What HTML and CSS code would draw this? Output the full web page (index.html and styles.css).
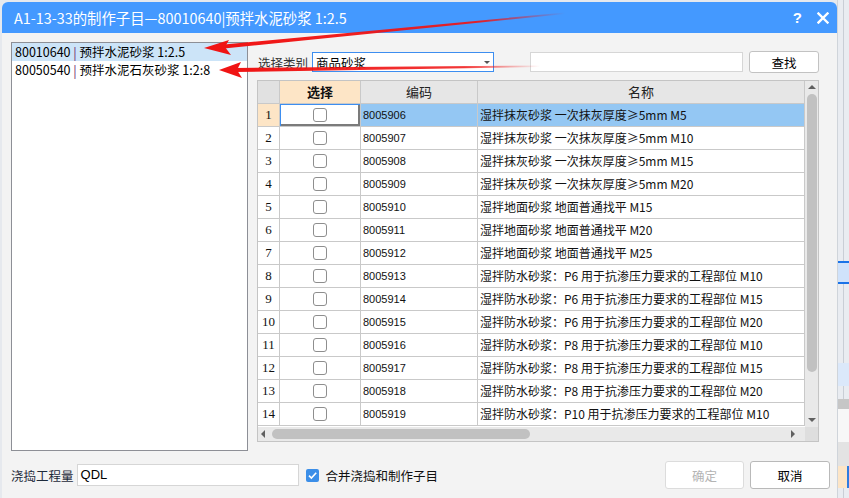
FILE: index.html
```html
<!DOCTYPE html>
<html>
<head>
<meta charset="utf-8">
<link rel="stylesheet" href="styles.css">
</head>
<body>
<div class="screen">
  <div class="dialog">
    <div class="titlebar">
      <span class="title">A1-13-33的制作子目—80010640|预拌水泥砂浆 1:2.5</span>
      <span class="tb-spacer"></span>
      <span class="tb-help">?</span>
      <svg class="tb-close" width="12" height="12" viewBox="0 0 12 12"><path d="M1.5 1.5 L10.5 10.5 M10.5 1.5 L1.5 10.5" stroke="#fff" stroke-width="2.4" stroke-linecap="square"/></svg>
    </div>
    <div class="main">
      <div class="list">
        <div class="list-item sel">80010640 <span class="pipe">|</span> 预拌水泥砂浆 1:2.5</div>
        <div class="list-item">80050540 <span class="pipe">|</span> 预拌水泥石灰砂浆 1:2:8</div>
      </div>
      <div class="panel">
        <div class="toolbar">
          <span class="lbl">选择类别</span>
          <div class="combo"><span class="combo-text">商品砂浆</span><span class="caret"></span></div>
          <div class="search"></div>
          <div class="btn find">查找</div>
        </div>
        <div class="gridwrap">
          <div class="grid">
            <div class="hc corner-h"></div>
            <div class="hc hsel">选择</div>
            <div class="hc">编码</div>
            <div class="hc">名称</div>

            <div class="rn rsel">1</div><div class="ck focus"><span class="box"></span></div><div class="code rowsel">8005906</div><div class="name rowsel">湿拌抹灰砂浆 一次抹灰厚度≥5mm M5</div>
            <div class="rn">2</div><div class="ck"><span class="box"></span></div><div class="code">8005907</div><div class="name">湿拌抹灰砂浆 一次抹灰厚度≥5mm M10</div>
            <div class="rn">3</div><div class="ck"><span class="box"></span></div><div class="code">8005908</div><div class="name">湿拌抹灰砂浆 一次抹灰厚度≥5mm M15</div>
            <div class="rn">4</div><div class="ck"><span class="box"></span></div><div class="code">8005909</div><div class="name">湿拌抹灰砂浆 一次抹灰厚度≥5mm M20</div>
            <div class="rn">5</div><div class="ck"><span class="box"></span></div><div class="code">8005910</div><div class="name">湿拌地面砂浆 地面普通找平 M15</div>
            <div class="rn">6</div><div class="ck"><span class="box"></span></div><div class="code">8005911</div><div class="name">湿拌地面砂浆 地面普通找平 M20</div>
            <div class="rn">7</div><div class="ck"><span class="box"></span></div><div class="code">8005912</div><div class="name">湿拌地面砂浆 地面普通找平 M25</div>
            <div class="rn">8</div><div class="ck"><span class="box"></span></div><div class="code">8005913</div><div class="name">湿拌防水砂浆：P6 用于抗渗压力要求的工程部位 M10</div>
            <div class="rn">9</div><div class="ck"><span class="box"></span></div><div class="code">8005914</div><div class="name">湿拌防水砂浆：P6 用于抗渗压力要求的工程部位 M15</div>
            <div class="rn">10</div><div class="ck"><span class="box"></span></div><div class="code">8005915</div><div class="name">湿拌防水砂浆：P6 用于抗渗压力要求的工程部位 M20</div>
            <div class="rn">11</div><div class="ck"><span class="box"></span></div><div class="code">8005916</div><div class="name">湿拌防水砂浆：P8 用于抗渗压力要求的工程部位 M10</div>
            <div class="rn">12</div><div class="ck"><span class="box"></span></div><div class="code">8005917</div><div class="name">湿拌防水砂浆：P8 用于抗渗压力要求的工程部位 M15</div>
            <div class="rn">13</div><div class="ck"><span class="box"></span></div><div class="code">8005918</div><div class="name">湿拌防水砂浆：P8 用于抗渗压力要求的工程部位 M20</div>
            <div class="rn">14</div><div class="ck"><span class="box"></span></div><div class="code">8005919</div><div class="name">湿拌防水砂浆：P10 用于抗渗压力要求的工程部位 M10</div>
          </div>
          <div class="vscroll">
            <span class="arr-up"></span>
            <span class="vthumb"></span>
            <span class="sb-spacer"></span>
            <span class="arr-down"></span>
          </div>
          <div class="hscroll">
            <span class="arr-left"></span>
            <span class="hthumb"></span>
            <span class="sb-spacer"></span>
            <span class="arr-right"></span>
          </div>
          <div class="sb-corner"></div>
        </div>
      </div>
    </div>
    <div class="footer">
      <span class="lbl qty">浇捣工程量</span>
      <div class="input">QDL</div>
      <span class="chk"><svg width="13" height="13" viewBox="0 0 13 13"><path d="M3 6.6 L5.4 9 L10.2 3.8" fill="none" stroke="#fff" stroke-width="1.6"/></svg></span>
      <span class="chk-label">合并浇捣和制作子目</span>
      <span class="ft-spacer"></span>
      <div class="btn dis">确定</div>
      <div class="btn cancel">取消</div>
    </div>
  </div>
  <div class="bgstrip">
    <div class="bg-a"></div>
    <div class="bg-blue"></div>
    <div class="bg-b"></div>
    <div class="bg-lb"></div>
    <div class="bg-c"></div>
    <div class="bg-gray"></div>
    <div class="bg-white"></div>
    <div class="bg-cells"></div>
    <div class="bg-peach"></div>
    <div class="bg-d"></div>
  </div>
  <svg class="arrows" width="849" height="498" viewBox="0 0 849 498">
    <defs>
      <linearGradient id="g1" x1="226" y1="0" x2="565" y2="0" gradientUnits="userSpaceOnUse">
        <stop offset="0" stop-color="#f01414" stop-opacity="1"/>
        <stop offset="0.75" stop-color="#f01414" stop-opacity="0.9"/>
        <stop offset="1" stop-color="#f01414" stop-opacity="0"/>
      </linearGradient>
      <linearGradient id="g2" x1="236" y1="0" x2="540" y2="0" gradientUnits="userSpaceOnUse">
        <stop offset="0" stop-color="#f01414" stop-opacity="1"/>
        <stop offset="0.75" stop-color="#f01414" stop-opacity="0.85"/>
        <stop offset="1" stop-color="#f01414" stop-opacity="0"/>
      </linearGradient>
    </defs>
    <polygon points="224,44.5 565,12.5 565,14 224,48.5" fill="url(#g1)"/>
    <polygon points="204,48 229,40 225,47 231,55" fill="#f01414"/>
    <polygon points="234,68 540,65.5 540,67 234,72" fill="url(#g2)"/>
    <polygon points="219,70 241,62 237,70 242,78" fill="#f01414"/>
  </svg>
</div>
</body>
</html>
```

FILE: styles.css
```css
* { box-sizing: border-box; }
html, body { margin: 0; padding: 0; }
body {
  width: 849px;
  height: 498px;
  overflow: hidden;
  background: #e4e8ee;
  font-family: "Noto Sans CJK SC", "Liberation Sans", sans-serif;
  color: #111;
}
.screen {
  position: relative;
  width: 849px;
  height: 498px;
  display: flex;
  padding: 2px 0 0 2px;
  background: #e6e9ee;
}
.dialog {
  width: 835px;
  height: 496px;
  background: #f3f3f3;
  border-radius: 6px 6px 0 0;
  display: flex;
  flex-direction: column;
  overflow: hidden;
}
.titlebar {
  height: 31px;
  flex: none;
  background: #4499ff;
  color: #fff;
  display: flex;
  align-items: center;
  padding: 0 8px 0 12px;
}
.title { font-size: 14.4px; }
.tb-spacer { flex: 1; }
.tb-help {
  font-family: "Liberation Sans", sans-serif;
  font-weight: bold;
  font-size: 15px;
  margin-right: 15px;
}
.tb-close { display: block; }

.main {
  display: flex;
  margin-top: 9px;
  padding-left: 9px;
  height: 409px;
  flex: none;
}
.list {
  width: 237px;
  height: 409px;
  border: 1px solid #8d8f96;
  background: #fff;
}
.list-item {
  height: 18px;
  line-height: 18px;
  padding-left: 3px;
  font-size: 12.5px;
  color: #000;
  white-space: nowrap;
}
.list-item.sel { background: #cce4f8; }
.pipe { color: #6b1a6b; }

.panel {
  margin-left: 9px;
  width: 562px;
  display: flex;
  flex-direction: column;
  padding-top: 9px;
}
.toolbar {
  height: 22px;
  display: flex;
  align-items: center;
  padding-left: 1px;
}
.lbl { font-size: 12.5px; color: #333; }
.combo {
  margin-left: 4px;
  width: 182px;
  height: 20px;
  background: #fff;
  border: 1px solid #3d8ef0;
  display: flex;
  align-items: center;
  padding-left: 3px;
}
.combo-text { font-size: 12.5px; color: #000; flex: 1; }
.caret {
  width: 0; height: 0;
  border-left: 3px solid transparent;
  border-right: 3px solid transparent;
  border-top: 3px solid #555;
  margin-right: 3px;
  margin-top: 1px;
}
.search {
  margin-left: 36px;
  width: 213px;
  height: 20px;
  background: #fff;
  border: 1px solid #d6d6d6;
}
.btn {
  display: flex;
  align-items: center;
  justify-content: center;
  background: #fff;
  border: 1px solid #c2c2c2;
  border-radius: 3px;
  font-size: 12.5px;
  color: #000;
}
.find { margin-left: 6px; width: 70px; height: 22px; }

.gridwrap {
  margin-top: 7px;
  width: 562px;
  height: 362px;
  border: 1px solid #c4c4c4;
  background: #e8e8e8;
  display: grid;
  grid-template-columns: 547px 13px;
  grid-template-rows: 346px 14px;
}
.grid {
  overflow: hidden;
  display: grid;
  grid-template-columns: 22px 81px 117px 327px;
  grid-auto-rows: 23px;
  background: #fff;
}
.grid > div {
  border-right: 1px solid #c9c9c9;
  border-bottom: 1px solid #c9c9c9;
  white-space: nowrap;
  overflow: hidden;
}
.hc {
  background: #e6e6e6;
  font-size: 13px;
  color: #222;
  text-align: center;
  line-height: 22px;
}
.corner-h { background: #e1e1e1; }
.hsel { background: #fde5c6; font-weight: bold; color: #111; }
.rn {
  font-family: "Liberation Serif", serif;
  font-size: 13px;
  text-align: center;
  line-height: 22px;
  color: #111;
  background: #fff;
}
.rn.rsel { background: #fde5c6; }
.ck {
  display: flex;
  align-items: center;
  justify-content: center;
}
.ck.focus {
  box-shadow: inset 1px 1px 0 #3d8ef0, inset -2px -2px 0 #7b7b7b;
}
.box {
  width: 14px;
  height: 14px;
  border: 1px solid #8e8e8e;
  border-radius: 3px;
  background: #fff;
}
.code {
  font-family: "Liberation Sans", sans-serif;
  font-size: 11px;
  line-height: 22px;
  padding-left: 2px;
  color: #111;
}
.name {
  font-size: 12px;
  line-height: 22px;
  padding-left: 2px;
  color: #111;
}
.rowsel { background: #94c7f3; }

.vscroll {
  background: #e9e9e9;
  display: flex;
  flex-direction: column;
  align-items: center;
  padding: 4px 0 5px;
}
.arr-up {
  width: 0; height: 0;
  border-left: 4px solid transparent;
  border-right: 4px solid transparent;
  border-bottom: 4px solid #606060;
}
.arr-down {
  width: 0; height: 0;
  border-left: 4px solid transparent;
  border-right: 4px solid transparent;
  border-top: 4px solid #606060;
}
.vthumb {
  margin-top: 5px;
  width: 10px;
  height: 278px;
  border-radius: 5px;
  background: #c1c1c1;
}
.sb-spacer { flex: 1; }
.hscroll {
  background: #e9e9e9;
  display: flex;
  align-items: center;
  padding: 0 10px 0 3px;
}
.arr-left {
  width: 0; height: 0;
  border-top: 4px solid transparent;
  border-bottom: 4px solid transparent;
  border-right: 4px solid #606060;
}
.arr-right {
  width: 0; height: 0;
  border-top: 4px solid transparent;
  border-bottom: 4px solid transparent;
  border-left: 4px solid #606060;
}
.hthumb {
  margin-left: 7px;
  width: 258px;
  height: 10px;
  border-radius: 5px;
  background: #c1c1c1;
}
.sb-corner { background: #dedede; }

.footer {
  margin-top: 10px;
  height: 28px;
  display: flex;
  align-items: center;
  padding: 0 7px 0 9px;
}
.qty { color: #1d2a3a; }
.input {
  margin-left: 3px;
  width: 222px;
  height: 22px;
  background: #fff;
  border: 1px solid #d6d6d6;
  font-family: "Liberation Sans", sans-serif;
  font-size: 13px;
  line-height: 20px;
  padding-left: 3px;
  color: #000;
}
.chk {
  margin-left: 7px;
  width: 13px;
  height: 13px;
  border-radius: 2px;
  background: #3b8ee8;
  display: flex;
}
.chk-label { margin-left: 7px; font-size: 12.5px; color: #111; }
.ft-spacer { flex: 1; }
.dis { width: 79px; height: 28px; color: #b4b4b4; border-color: #dcdcdc; }
.cancel { margin-left: 6px; width: 80px; height: 28px; border-color: #b9b9b9; }

.bgstrip {
  width: 12px;
  margin-top: -2px;
  height: 498px;
  display: flex;
  flex-direction: column;
  border-left: 1px solid #cfd4da;
}
.bg-a, .bg-b, .bg-c, .bg-d {
  background-color: #e9ecf1;
  background-image: linear-gradient(90deg, transparent 5px, #c9ced6 5px, #c9ced6 6px, transparent 6px);
}
.bg-a { height: 261px; }
.bg-blue { height: 23px; background: #cfe2fb; border-top: 2px solid #1a73e8; border-bottom: 2px solid #1a73e8; }
.bg-b { height: 79px; }
.bg-lb { height: 23px; background: #dbe8fa; }
.bg-c { height: 13px; }
.bg-gray { height: 10px; background: #c6c6c6; }
.bg-white { height: 33px; background: #f7f7f7; }
.bg-cells { height: 24px; background: #e3e3e3; }
.bg-peach { height: 22px; background: #fde5c6; border-right: 2px solid #2f7de1; }
.bg-d { height: 10px; }

.arrows {
  position: absolute;
  left: 0;
  top: 0;
  pointer-events: none;
}
```
